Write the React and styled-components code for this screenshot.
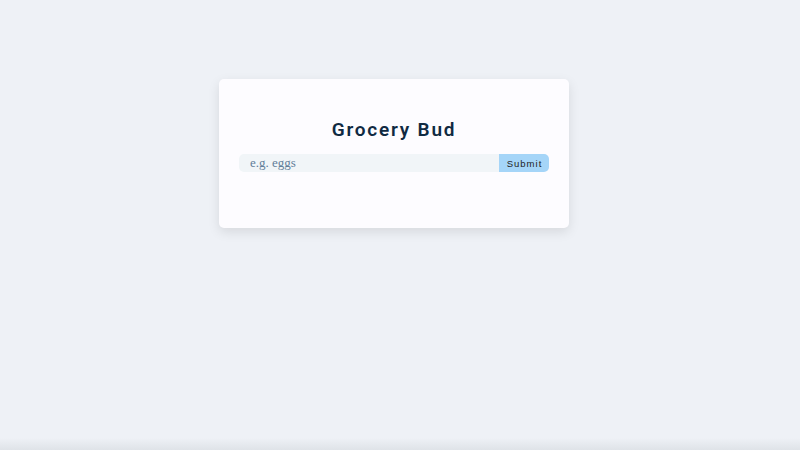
import React, { useState } from "react";
import styled, { createGlobalStyle } from "styled-components";

const GlobalStyle = createGlobalStyle`
  * {
    box-sizing: border-box;
  }

  body {
    margin: 0;
    min-height: 450px;
    background: #eef1f6;
    font-family: Roboto, "Liberation Sans", sans-serif;
  }
`;

const Page = styled.main`
  min-height: 450px;
  padding: 79px 12px 0 0;
  background: linear-gradient(to bottom, #eef1f6 0, #eef1f6 438px, #dfe3e8 450px);
`;

const Card = styled.section`
  width: 350px;
  margin: 0 auto;
  padding: 20px 20px 56px;
  background: #fdfcff;
  border-radius: 5px;
  box-shadow: 0 4px 12px rgba(0, 0, 0, 0.1);
`;

const Form = styled.form`
  display: flex;
  flex-direction: column;
`;

const Title = styled.h3`
  margin: 15px 0 9px;
  height: 31px;
  line-height: 31px;
  text-align: center;
  font-size: 19px;
  font-weight: 600;
  letter-spacing: 1.8px;
  color: #102a42;
`;

const Row = styled.div`
  display: flex;
  height: 18px;
`;

const Input = styled.input`
  flex: 1;
  min-width: 0;
  height: 18px;
  padding: 0 0 0 11px;
  border: none;
  border-radius: 5px 0 0 5px;
  background: #f1f5f8;
  font-family: "Liberation Serif", "DejaVu Serif", serif;
  font-size: 13px;
  color: #102a42;
  outline: none;

  &::placeholder {
    color: #617d98;
  }
`;

const Button = styled.button`
  width: 50px;
  height: 18px;
  padding: 0 0 0 1px;
  border: none;
  border-radius: 0 5px 5px 0;
  background: #a5d5f8;
  font-family: "Liberation Sans", Arial, sans-serif;
  font-size: 9.5px;
  letter-spacing: 1px;
  color: #222;
  cursor: pointer;
`;

export default function App() {
  const [name, setName] = useState("");

  const onSubmit = (event) => {
    event.preventDefault();
    setName("");
  };

  return (
    <>
      <GlobalStyle />
      <Page>
        <Card>
          <Form onSubmit={onSubmit}>
            <Title>Grocery Bud</Title>
            <Row>
              <Input
                type="text"
                placeholder="e.g. eggs"
                value={name}
                onChange={(event) => setName(event.target.value)}
              />
              <Button type="submit">Submit</Button>
            </Row>
          </Form>
        </Card>
      </Page>
    </>
  );
}
